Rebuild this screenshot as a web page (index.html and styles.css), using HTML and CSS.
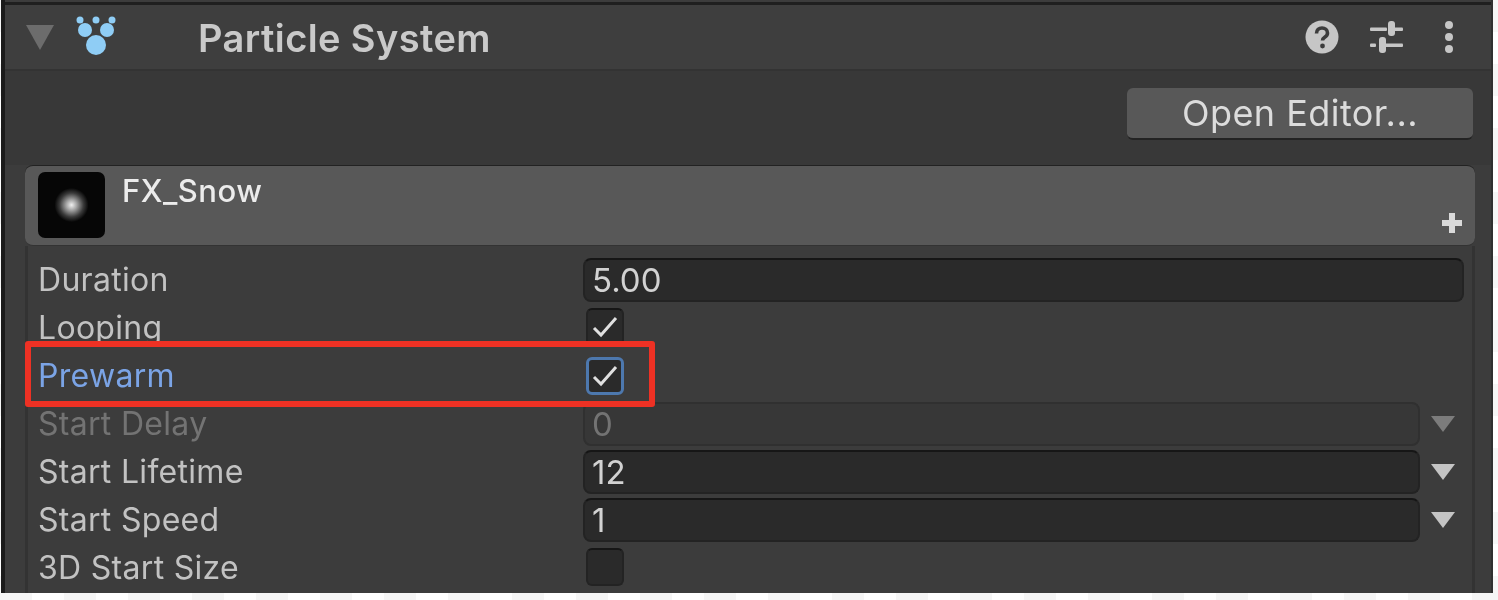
FILE: index.html

```html
<!DOCTYPE html>
<html lang="en">
<head>
  <meta charset="UTF-8">
  <title>Particle System</title>
  <link rel="stylesheet" href="styles.css">
</head>
<body>
  <div class="inspector">
    <div class="title-bar">
      <svg class="foldout" width="28" height="25" viewBox="0 0 28 25"><path d="M0 0H28L14 25Z"/></svg>
      <svg class="ps-icon" width="44" height="44" viewBox="0 0 44 44">
        <circle cx="4" cy="4" r="3.5"/><circle cx="20" cy="4" r="3.5"/><circle cx="36" cy="4" r="3.5"/>
        <circle cx="9" cy="14" r="7"/><circle cx="31" cy="14" r="7"/><circle cx="20" cy="29" r="10"/>
      </svg>
      <span class="title">Particle System</span>
      <div class="title-icons">
        <svg width="34" height="34" viewBox="0 0 34 34">
          <circle cx="17" cy="17" r="16.5" fill="#c6c6c6"/>
          <path d="M11.5 13.5C11.5 10 14 8 17 8s5.5 2 5.5 5c0 2.2-1.3 3.3-2.8 4.3-1.4.9-2.2 1.6-2.2 3.2" fill="none" stroke="#3c3c3c" stroke-width="3.6"/>
          <circle cx="17.5" cy="26" r="2.4" fill="#3c3c3c"/>
        </svg>
        <svg class="sliders" width="34" height="34" viewBox="0 0 34 34" fill="#c6c6c6">
          <rect x="1" y="7.500" width="17" height="3.500" rx="1"/><rect x="25" y="7.500" width="9" height="3.500" rx="1"/>
          <rect x="19" y="1" width="7" height="15" rx="3"/>
          <rect x="1" y="23.500" width="6" height="3.500" rx="1"/><rect x="15" y="23.500" width="19" height="3.500" rx="1"/>
          <rect x="10" y="17" width="7" height="16" rx="3"/>
        </svg>
        <svg class="dots" width="10" height="34" viewBox="0 0 10 34" fill="#c6c6c6">
          <circle cx="5" cy="5" r="4"/><circle cx="5" cy="17" r="4"/><circle cx="5" cy="29" r="4"/>
        </svg>
      </div>
    </div>

    <div class="toolbar">
      <button class="open-editor">Open Editor...</button>
    </div>

    <div class="module">
      <div class="module-head">
        <div class="thumb"></div>
        <span class="module-name">FX_Snow</span>
        <svg class="plus" width="20" height="20" viewBox="0 0 20 20"><path d="M7 0H13V7H20V13H13V20H7V13H0V7H7Z"/></svg>
      </div>

      <div class="rows">
        <div class="row">
          <span class="label">Duration</span>
          <div class="field">5.00</div>
        </div>
        <div class="row">
          <span class="label">Looping</span>
          <div class="check">
            <svg width="28" height="24" viewBox="0 0 28 24"><path d="M3 13L10 20L25 3"/></svg>
          </div>
        </div>
        <div class="row">
          <span class="label label-blue">Prewarm</span>
          <div class="check check-focus">
            <svg width="28" height="24" viewBox="0 0 28 24"><path d="M3 13L10 20L25 3"/></svg>
          </div>
        </div>
        <div class="row row-disabled">
          <span class="label">Start Delay</span>
          <div class="field field-short">0</div>
          <svg class="caret" width="24" height="16" viewBox="0 0 24 16"><path d="M0 0H24L12 16Z"/></svg>
        </div>
        <div class="row">
          <span class="label">Start Lifetime</span>
          <div class="field field-short">12</div>
          <svg class="caret" width="24" height="16" viewBox="0 0 24 16"><path d="M0 0H24L12 16Z"/></svg>
        </div>
        <div class="row">
          <span class="label">Start Speed</span>
          <div class="field field-short">1</div>
          <svg class="caret" width="24" height="16" viewBox="0 0 24 16"><path d="M0 0H24L12 16Z"/></svg>
        </div>
        <div class="row">
          <span class="label">3D Start Size</span>
          <div class="check"></div>
        </div>
      </div>
    </div>

    <!-- red annotation box -->
    <div class="highlight"></div>
  </div>
</body>
</html>
```

FILE: styles.css

```css
html, body {
  height: 100%;
}
body {
  margin: 0;
  overflow: hidden;
  background: conic-gradient(#fff 25%, #f6f6f6 0 50%, #fff 0 75%, #f6f6f6 0) 0 0 / 64px 64px;
  font-family: Inter, "Liberation Sans", sans-serif;
  color: #c4c4c4;
}
.inspector {
  position: relative;
  box-sizing: border-box;
  width: 1492px;
  height: 593px;
  margin-left: 1px;
  padding-top: 2px;
  background-color: #3c3c3c;
  border-left: 4px solid #1b1b1b;
  border-right: 2px solid #303030;
  overflow: hidden;
  filter: blur(0.6px);
}
.title-bar {
  display: flex;
  align-items: center;
  box-sizing: border-box;
  height: 69px;
  padding: 0 0 0 21px;
  border-top: 3px solid #1f1f1f;
  border-bottom: 2px solid #333;
  background-color: #3e3e3e;
}
.foldout {
  fill: #6c6c6c;
  margin-top: 1px;
}
.ps-icon {
  fill: #8fcdf5;
  margin-left: 22px;
  margin-top: 1px;
}
.title {
  margin-left: 78px;
  margin-top: 1px;
  font-size: 38px;
  font-weight: 600;
  letter-spacing: 0.4px;
  color: #c9c9c9;
}
.title-icons {
  display: flex;
  align-items: center;
  margin-left: auto;
  margin-right: 37px;
  gap: 30px;
}
.dots {
  margin-left: 11px;
}
.toolbar {
  display: flex;
  justify-content: flex-end;
  box-sizing: border-box;
  height: 94px;
  padding: 17px 18px 0 0;
  background-color: #383838;
}
.open-editor {
  width: 346px;
  height: 52px;
  border: none;
  border-bottom: 2px solid #232323;
  border-radius: 6px;
  background-color: #585858;
  color: #dcdcdc;
  font-family: inherit;
  font-size: 36px;
  letter-spacing: 0.45px;
}
.module {
  margin-left: 20px;
  margin-right: 16px;
  background-color: #3c3c3c;
}
.module-head {
  position: relative;
  display: flex;
  box-sizing: border-box;
  height: 81px;
  padding: 6px 0 0 13px;
  border-top: 1px solid #222;
  border-bottom: 1px solid #333;
  border-radius: 8px;
  background-color: #585858;
}
.thumb {
  width: 67px;
  height: 66px;
  border-radius: 7px;
  background: radial-gradient(circle at 50% 50%, #f0f0f0 0, #a8a8a8 5px, #3a3a3a 12px, #060606 17px);
}
.module-name {
  margin-left: 17px;
  font-size: 31px;
  font-weight: 500;
  letter-spacing: 0.5px;
  line-height: 38px;
  color: #ececec;
}
.plus {
  position: absolute;
  right: 13px;
  bottom: 12px;
  fill: #dadada;
}
.rows {
  display: flex;
  flex-direction: column;
  height: 360px;
  padding-top: 10px;
  padding-left: 10px;
  border-left: 3px solid #333;
  border-right: 3px solid #333;
}
.row {
  display: flex;
  flex: none;
  align-items: center;
  height: 48px;
}
.label {
  flex: none;
  width: 545px;
  margin-top: -2px;
  font-size: 32px;
  letter-spacing: 0.3px;
  color: #c2c2c2;
}
.label-blue {
  color: #7ba4e6;
}
.field {
  box-sizing: border-box;
  width: 881px;
  height: 44px;
  padding-left: 7px;
  border: 2px solid #232323;
  border-top-color: #161616;
  border-radius: 8px;
  background-color: #2a2a2a;
  font-size: 33px;
  line-height: 40px;
  color: #d2d2d2;
}
.field-short {
  width: 837px;
}
.caret {
  margin-left: 11px;
  fill: #c4c4c4;
}
.row-disabled .label,
.row-disabled .field {
  color: #737373;
}
.row-disabled .field {
  border-color: #303030;
  background-color: #373737;
}
.row-disabled .caret {
  fill: #7c7c7c;
}
.check {
  display: flex;
  align-items: center;
  justify-content: center;
  box-sizing: border-box;
  width: 38px;
  height: 38px;
  margin-left: 3px;
  margin-top: -2px;
  border: 2px solid #232323;
  border-top-color: #161616;
  border-radius: 6px;
  background-color: #2a2a2a;
}
.check svg {
  fill: none;
  stroke: #e0e0e0;
  stroke-width: 3;
}
.check-focus {
  margin-top: 0;
  border: 3px solid #4d78ae;
}
.highlight {
  position: absolute;
  top: 341px;
  left: 20px;
  box-sizing: border-box;
  width: 630px;
  height: 66px;
  border: 6px solid #ee3124;
  border-radius: 3px;
}
```
